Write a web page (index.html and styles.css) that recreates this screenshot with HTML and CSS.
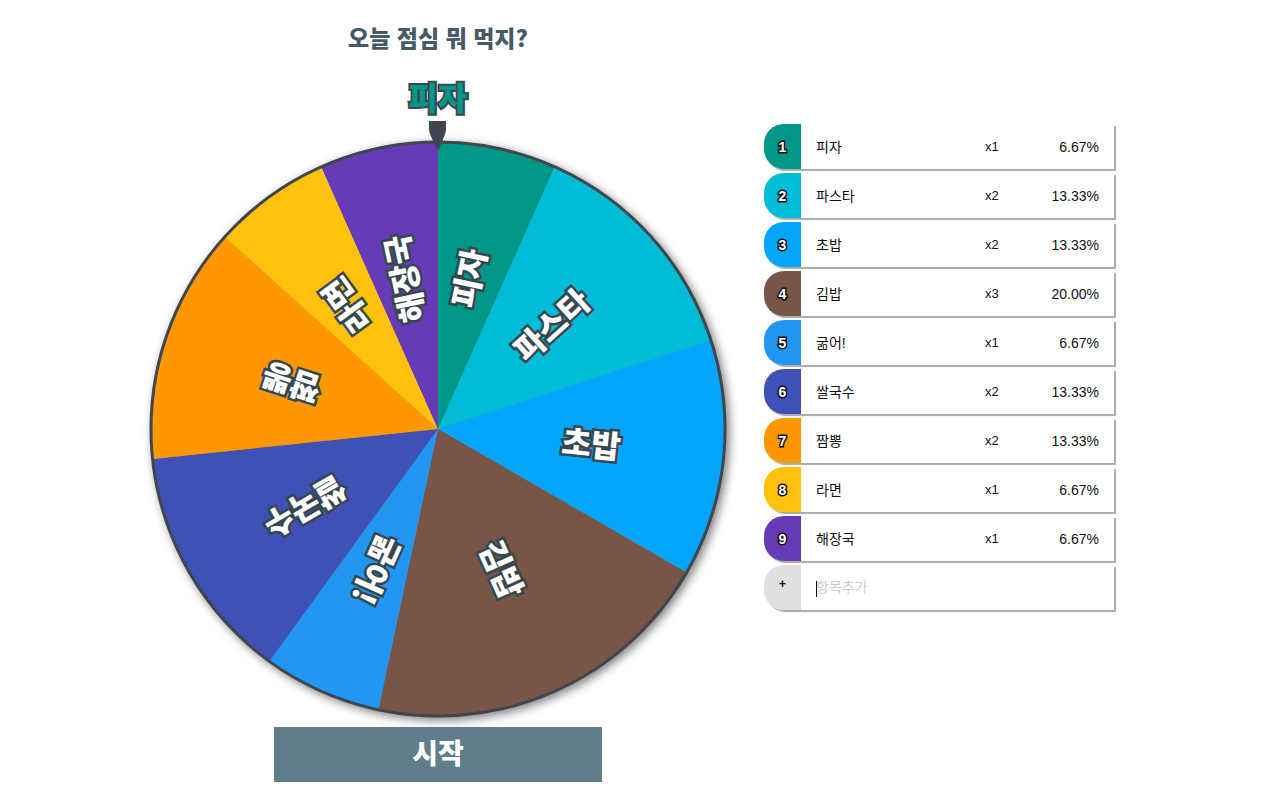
FILE: index.html
```html
<!DOCTYPE html>
<html lang="ko">
<head>
  <meta charset="UTF-8">
  <meta name="viewport" content="width=device-width, initial-scale=1.0">
  <title>오늘 점심 뭐 먹지?</title>
  <link rel="stylesheet" href="styles.css">
</head>
<body>
  <main class="container">
    <section class="roulette">
      <h1 class="title">오늘 점심 뭐 먹지?</h1>
      <p class="result">피자</p>
      <svg class="wheel" viewBox="0 0 580 607">
        <g class="slices" id="slices" transform="translate(290 309)"></g>
        <path class="pointer" d="M281 1H298V10Q297 16 290 31Q282 16 281 10Z"/>
      </svg>
      <button type="button" class="start">시작</button>
    </section>

    <section class="items">
      <ol class="item-list" id="itemList"></ol>
      <div class="item item-add">
        <button type="button" class="badge">+</button>
        <div class="field">
          <input type="text" class="name" id="newItem" placeholder="항목추가" aria-label="항목추가">
          <span class="caret"></span>
        </div>
      </div>
    </section>
  </main>

  <script>
    const items = [
      { name: '피자', count: 1, color: '#009688' },
      { name: '파스타', count: 2, color: '#00bcd7' },
      { name: '초밥', count: 2, color: '#03a6fb' },
      { name: '김밥', count: 3, color: '#795548' },
      { name: '굶어!', count: 1, color: '#2196f3' },
      { name: '쌀국수', count: 2, color: '#3f51b5' },
      { name: '짬뽕', count: 2, color: '#ff9800' },
      { name: '라면', count: 1, color: '#ffc10b' },
      { name: '해장국', count: 1, color: '#673ab7' }
    ];
    const radius = 287;
    const labelRadius = 154;
    const total = items.reduce((sum, item) => sum + item.count, 0);

    function point(angle) {
      const rad = (angle - 90) * Math.PI / 180;
      return (radius * Math.cos(rad)).toFixed(2) + ' ' + (radius * Math.sin(rad)).toFixed(2);
    }

    let angle = 0;
    let slices = '';
    let labels = '';
    let rows = '';

    items.forEach(function(item, i) {
      const end = angle + item.count / total * 360;
      const middle = (angle + end) / 2;
      slices += `<path d="M0 0L${point(angle)}A${radius} ${radius} 0 0 1 ${point(end)}Z" fill="${item.color}"/>`;
      labels += `<text class="label" transform="rotate(${middle - 90}) translate(${labelRadius} 0)" dy="11">${item.name}</text>`;
      rows += `<li class="item">
        <span class="badge" style="background-color: ${item.color}">${i + 1}</span>
        <input type="text" class="name" value="${item.name}" aria-label="항목 ${i + 1}">
        <span class="count">x${item.count}</span>
        <span class="percent">${(item.count / total * 100).toFixed(2)}%</span>
      </li>`;
      angle = end;
    });

    document.getElementById('slices').innerHTML =
      `<g class="disc">${slices}<circle class="rim" r="${radius}"/></g>${labels}`;
    document.getElementById('itemList').innerHTML = rows;
  </script>
</body>
</html>
```

FILE: styles.css
```css
* {
  box-sizing: border-box;
}

body {
  margin: 0;
  background-color: #fff;
  color: #111;
  font-family: "Liberation Sans", "Noto Sans CJK KR", sans-serif;
  font-size: 14px;
}

.container {
  display: flex;
  justify-content: center;
  align-items: flex-start;
  gap: 36px;
  padding: 18px 18px 16px 0;
}

.roulette {
  flex: 0 1 580px;
  display: flex;
  flex-direction: column;
  align-items: center;
  font-family: "Noto Sans CJK KR", sans-serif;
  font-weight: 900;
}

.title {
  margin: 0;
  color: #455a64;
  font-size: 23px;
  font-weight: 900;
  line-height: 38px;
}

.result {
  margin: 20px 0 4px;
  color: #009688;
  font-size: 32px;
  line-height: 40px;
  -webkit-text-stroke: 4px #40464f;
  paint-order: stroke fill;
}

.wheel {
  display: block;
  width: 100%;
  overflow: visible;
}

.disc {
  filter: drop-shadow(3px 3px 5px rgba(0, 0, 0, 0.5));
}

.rim {
  fill: none;
  stroke: #40464f;
  stroke-width: 3px;
}

.label {
  fill: #fff;
  stroke: #37474f;
  stroke-width: 5px;
  paint-order: stroke fill;
  font-size: 32px;
  text-anchor: middle;
}

.pointer {
  fill: #40464f;
}

.start {
  position: relative;
  width: 328px;
  max-width: 100%;
  padding: 0 0 4px;
  border: 0;
  background-color: #607d8b;
  color: #fff;
  font-family: inherit;
  font-size: 28px;
  font-weight: 900;
  line-height: 51px;
  cursor: pointer;
}

.items {
  flex: 0 1 350px;
  padding-top: 106px;
}

.item-list {
  margin: 0;
  padding: 0;
  list-style: none;
}

.item {
  display: flex;
  align-items: center;
  height: 45px;
  margin-bottom: 4px;
  padding-right: 15px;
  border-radius: 20px 0 0 20px;
  background-color: #fff;
  box-shadow: 2px 2px 1px #aaa;
}

.badge {
  flex: none;
  display: flex;
  align-items: center;
  justify-content: center;
  width: 37px;
  height: 100%;
  margin-right: 15px;
  padding: 0;
  border: 0;
  border-radius: 20px 0 0 20px;
  color: #fff;
  font-size: 14px;
  font-weight: bold;
  -webkit-text-stroke: 3px #111;
  paint-order: stroke fill;
}

.name {
  flex: 1;
  width: 0;
  min-width: 0;
  padding: 0 0 2px;
  border: 0;
  outline: 0;
  background: none;
  color: #111;
  font: inherit;
}

.name::placeholder {
  color: #ccc;
}

.count {
  width: 34px;
  font-size: 13px;
}

.percent {
  width: 80px;
  text-align: right;
}

.item-add .badge {
  background-color: #e0e0e0;
  color: #111;
  font-size: 12px;
  padding-bottom: 8px;
  -webkit-text-stroke: 0;
  cursor: pointer;
}

.field {
  position: relative;
  flex: 1;
  display: flex;
}

.caret {
  position: absolute;
  top: 2px;
  left: 0;
  width: 1px;
  height: 16px;
  background-color: #000;
}
```
